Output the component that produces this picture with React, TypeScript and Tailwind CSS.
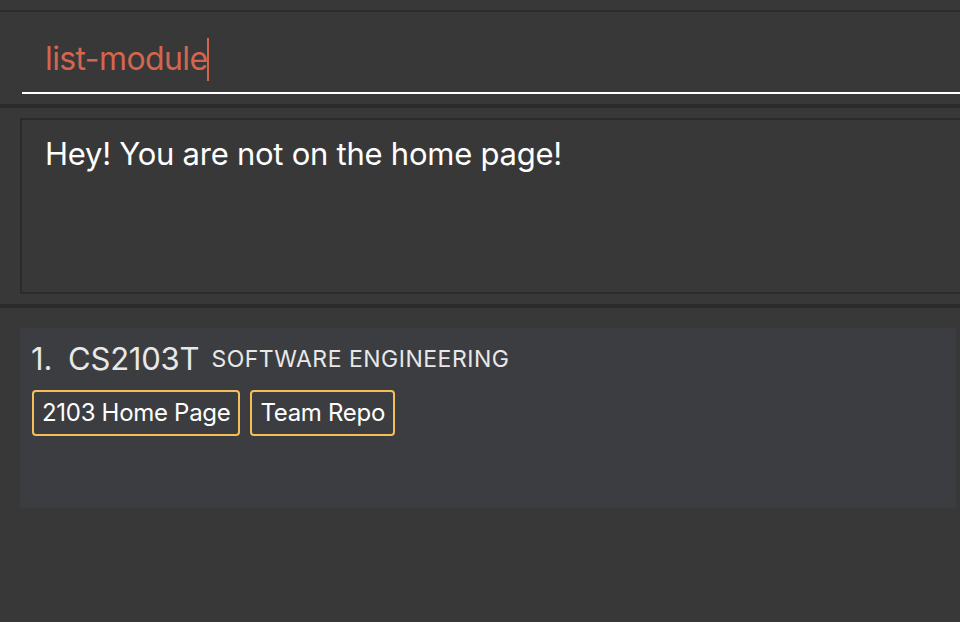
import React from "react"

// Dark-theme module tracker window: command box, result display, module list
const FONT = "font-['Inter','Liberation_Sans',sans-serif]"

function CommandBox() {
  return (
    <div className="h-[92px] pl-[22px] bg-[#383838]">
      <div className="h-[82px] border-b-2 border-white flex items-center pl-[23px] pt-[14px]">
        <span className="text-[32px] leading-[40px] text-[#d4654f] tracking-[-0.6px]">list-module</span>
        <span className="w-[2px] h-[43px] bg-[#d4654f] -ml-[1px]" />
      </div>
    </div>
  )
}

function ResultDisplay() {
  return (
    <div className="h-[196px] pt-[10px] pl-[20px] bg-[#383838]">
      <div className="w-[960px] h-[176px] border-2 border-[#2b2b2b] pl-[23px] pt-[14px]">
        <p className="text-[31px] leading-[40px] text-white tracking-[-0.25px]">Hey! You are not on the home page!</p>
      </div>
    </div>
  )
}

function Tag({ label }: { label: string }) {
  return (
    <span className="h-[46px] px-[8px] border-2 border-[#f4bf57] rounded-[4px] flex items-center text-[24px] text-white tracking-[-0.3px]">
      {label}
    </span>
  )
}

function ModuleCard() {
  return (
    <div className="ml-[20px] w-[936px] h-[180px] bg-[#3c3d40] pl-[12px] pt-[13px]">
      <div className="flex items-center h-[36px] text-[#e8e8e8]">
        <span className="text-[31px] w-[37px] -ml-[1px]">1.</span>
        <span className="text-[31px] tracking-[-0.2px]">CS2103T</span>
        <span className="text-[23px] ml-[12px] tracking-[0.5px]">SOFTWARE ENGINEERING</span>
      </div>
      <div className="flex gap-[10px] mt-[13px]">
        <Tag label="2103 Home Page" />
        <Tag label="Team Repo" />
      </div>
    </div>
  )
}

export default function App() {
  return (
    <div className={`w-[960px] h-[622px] bg-[#383838] overflow-hidden flex flex-col ${FONT}`}>
      <div className="h-[10px] shrink-0" />
      <div className="h-[2px] bg-[#2b2b2b] shrink-0" />
      <CommandBox />
      <div className="h-[4px] bg-[#2b2b2b] shrink-0" />
      <ResultDisplay />
      <div className="h-[4px] bg-[#2b2b2b] shrink-0" />
      <div className="pt-[20px]">
        <ModuleCard />
      </div>
    </div>
  )
}
